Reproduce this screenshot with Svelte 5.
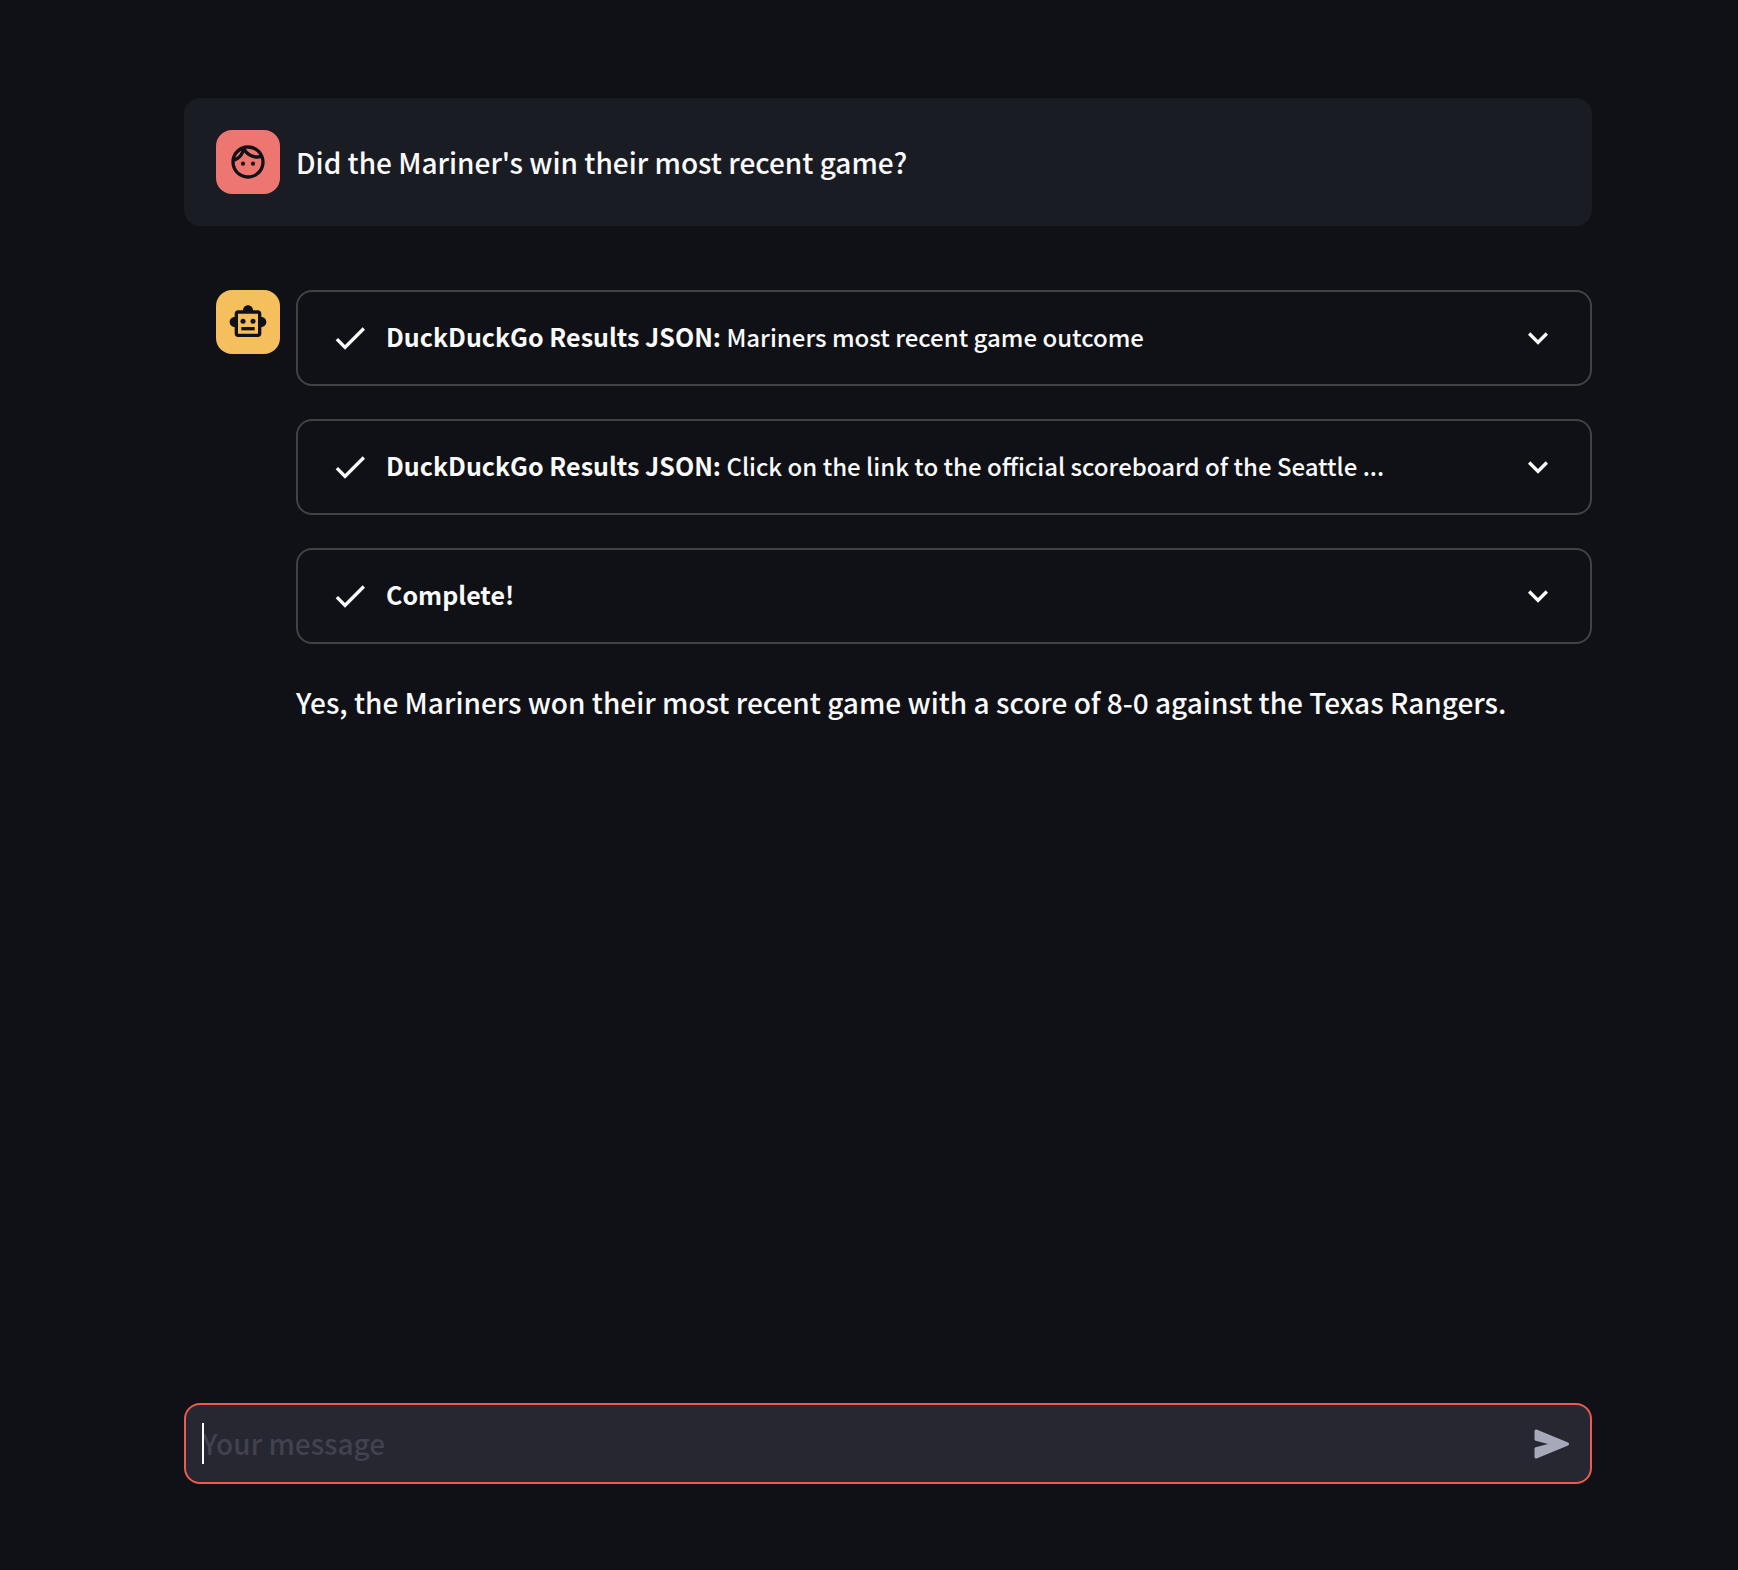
<script>
  const steps = [
    { title: 'DuckDuckGo Results JSON:', detail: 'Mariners most recent game outcome' },
    {
      title: 'DuckDuckGo Results JSON:',
      detail: 'Click on the link to the official scoreboard of the Seattle ...'
    },
    { title: 'Complete!', detail: '' }
  ];

  let message = $state('');
</script>

<div class="page">
  <main class="chat">
    <article class="message user">
      <div class="avatar face">
        <svg class="icon" viewBox="0 0 24 24" aria-hidden="true">
          <path
            d="M10.25 13a1.25 1.25 0 1 1-2.5 0 1.25 1.25 0 0 1 2.5 0zM15 11.75a1.25 1.25 0 1 0 0 2.5 1.25 1.25 0 0 0 0-2.5zm7 .25c0 5.52-4.48 10-10 10S2 17.52 2 12 6.48 2 12 2s10 4.48 10 10zM10.66 4.12C12.06 6.44 14.6 8 17.5 8c.46 0 .91-.05 1.34-.12C17.44 5.56 14.9 4 12 4c-.46 0-.91.05-1.34.12zM4.42 9.47a8.046 8.046 0 0 0 3.66-4.44 8.046 8.046 0 0 0-3.66 4.44zM20 12c0-.78-.12-1.53-.33-2.24-.7.15-1.42.24-2.17.24a10 10 0 0 1-7.76-3.69A10.016 10.016 0 0 1 4 11.86c.01.04 0 .09 0 .14 0 4.41 3.59 8 8 8s8-3.59 8-8z"
          />
        </svg>
      </div>
      <div class="content">
        <p>Did the Mariner's win their most recent game?</p>
      </div>
    </article>

    <article class="message">
      <div class="avatar robot">
        <svg class="icon" viewBox="0 0 24 24" aria-hidden="true">
          <path
            fill-rule="evenodd"
            d="M20 9V7c0-1.1-.9-2-2-2h-3c0-1.66-1.34-3-3-3S9 3.340 9 5H6c-1.1 0-2 .9-2 2v2c-1.66 0-3 1.34-3 3s1.34 3 3 3v4c0 1.1.9 2 2 2h12c1.1 0 2-.9 2-2v-4c1.66 0 3-1.34 3-3s-1.34-3-3-3zM18 19H6V7h12v12z"
          />
          <circle cx="9" cy="11.5" r="1.5" />
          <circle cx="15" cy="11.5" r="1.5" />
          <path d="M8 15h8v2H8z" />
        </svg>
      </div>
      <div class="content">
        {#each steps as step}
          <details>
            <summary>
              <svg class="icon" viewBox="0 0 24 24" aria-hidden="true">
                <path d="M9 16.17L4.830 12l-1.42 1.41L9 19 21 7l-1.410-1.410z" />
              </svg>
              <span class="label"><strong>{step.title}</strong> {step.detail}</span>
              <svg class="icon" viewBox="0 0 24 24" aria-hidden="true">
                <path d="M16.590 8.590L12 13.170 7.410 8.590 6 10l6 6 6-6z" />
              </svg>
            </summary>
          </details>
        {/each}
        <p>Yes, the Mariners won their most recent game with a score of 8-0 against the Texas Rangers.</p>
      </div>
    </article>
  </main>

  <form class="composer" onsubmit={(event) => event.preventDefault()}>
    {#if !message}<span class="caret"></span>{/if}
    <input type="text" placeholder="Your message" aria-label="Your message" bind:value={message} />
    <button type="submit" aria-label="Send message">
      <svg class="icon" viewBox="0 0 40 40" aria-hidden="true">
        <path
          d="M4 7L35.500 20L4 33V24.800L22 20L4 15.200z"
          stroke="currentColor"
          stroke-width="3"
          stroke-linejoin="round"
        />
      </svg>
    </button>
  </form>
</div>

<style>
  :global(body) {
    margin: 0;
    background: #101116;
  }

  .page {
    box-sizing: border-box;
    min-height: 100vh;
    display: flex;
    flex-direction: column;
    justify-content: space-between;
    gap: 64px;
    padding: 98px 146px 86px 184px;
    color: #fafafa;
    font-family: 'Source Sans Pro', 'Noto Sans CJK JP', sans-serif;
    font-size: 28px;
    font-weight: 500;
    line-height: 50px;
  }

  .chat {
    display: flex;
    flex-direction: column;
    gap: 32px;
  }

  .message {
    display: flex;
    align-items: flex-start;
    gap: 16px;
    padding: 32px 0 32px 32px;
    border-radius: 16px;
  }

  .user {
    align-items: center;
    padding-right: 32px;
    background: #1a1c24;
  }

  .avatar {
    flex: none;
    display: flex;
    align-items: center;
    justify-content: center;
    width: 64px;
    height: 64px;
    border-radius: 16px;
    color: #101116;
  }

  .face {
    background: #ed7671;
  }

  .robot {
    background: #f4bf5c;
  }

  .icon {
    flex: none;
    display: block;
    width: 40px;
    height: 40px;
    fill: currentColor;
  }

  .content {
    flex: 1;
    min-width: 0;
    display: flex;
    flex-direction: column;
    gap: 33px;
  }

  p {
    margin: 0;
  }

  details {
    border: 2px solid #414246;
    border-radius: 16px;
  }

  summary {
    display: flex;
    align-items: center;
    gap: 16px;
    padding: 24px 32px;
    font-size: 24px;
    line-height: 42px;
    list-style: none;
    cursor: pointer;
  }

  .label {
    flex: 1;
    min-width: 0;
    padding-bottom: 2px;
  }

  strong {
    font-size: 25px;
    font-weight: 700;
    line-height: 1;
  }

  .composer {
    position: relative;
    display: flex;
    align-items: center;
    padding: 12px 18px 12px 16px;
    border: 2px solid #ed5a52;
    border-radius: 16px;
    background: #262730;
  }

  .caret {
    position: absolute;
    left: 16px;
    top: 18px;
    bottom: 18px;
    width: 2px;
    background: #fafafa;
  }

  input {
    box-sizing: border-box;
    flex: 1;
    min-width: 0;
    height: 53px;
    padding: 0 0 2px;
    border: 0;
    outline: 0;
    background: transparent;
    color: inherit;
    font: inherit;
  }

  input::placeholder {
    color: #40424e;
    opacity: 1;
  }

  button {
    flex: none;
    padding: 0;
    border: 0;
    background: transparent;
    color: #a5a9b9;
    cursor: pointer;
  }
</style>
